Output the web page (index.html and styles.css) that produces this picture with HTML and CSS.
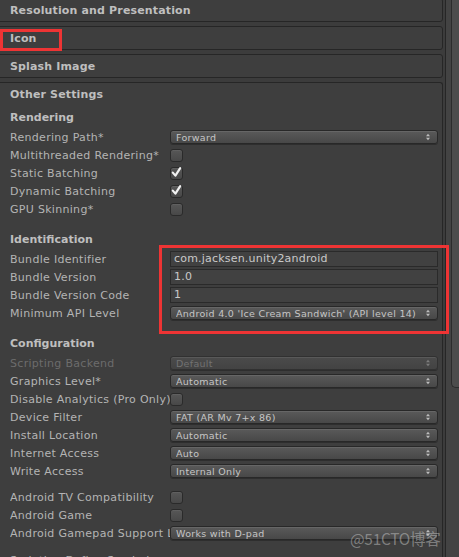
FILE: index.html
```html
<!DOCTYPE html>
<html>
<head>
<meta charset="utf-8">
<link rel="stylesheet" href="styles.css">
</head>
<body>
<div class="window">
  <div class="inspector">
    <div class="foldout first"><div class="foldout-title">Resolution and Presentation</div></div>
    <div class="foldout"><div class="foldout-title">Icon</div></div>
    <div class="foldout"><div class="foldout-title">Splash Image</div></div>
    <div class="foldout open">
      <div class="foldout-title">Other Settings</div>

      <div class="section top">Rendering</div>
      <div class="row"><div class="label">Rendering Path*</div><div class="popup"><span>Forward</span><svg class="arrows" viewBox="0 0 5 9"><path d="M0 3.5 L2.5 0.5 L5 3.5 Z M0 5.5 L2.5 8.5 L5 5.5 Z"/></svg></div></div>
      <div class="row"><div class="label">Multithreaded Rendering*</div><div class="check"></div></div>
      <div class="row"><div class="label">Static Batching</div><div class="check on"><svg viewBox="0 0 13 13"><path d="M2.8 6.6 L5.4 9.6 L10.2 2.2"/></svg></div></div>
      <div class="row"><div class="label">Dynamic Batching</div><div class="check on"><svg viewBox="0 0 13 13"><path d="M2.8 6.6 L5.4 9.6 L10.2 2.2"/></svg></div></div>
      <div class="row"><div class="label">GPU Skinning*</div><div class="check"></div></div>

      <div class="section">Identification</div>
      <div class="row"><div class="label">Bundle Identifier</div><div class="field">com.jacksen.unity2android</div></div>
      <div class="row"><div class="label">Bundle Version</div><div class="field">1.0</div></div>
      <div class="row"><div class="label">Bundle Version Code</div><div class="field">1</div></div>
      <div class="row"><div class="label">Minimum API Level</div><div class="popup"><span>Android 4.0 'Ice Cream Sandwich' (API level 14)</span><svg class="arrows" viewBox="0 0 5 9"><path d="M0 3.5 L2.5 0.5 L5 3.5 Z M0 5.5 L2.5 8.5 L5 5.5 Z"/></svg></div></div>

      <div class="section">Configuration</div>
      <div class="row disabled"><div class="label">Scripting Backend</div><div class="popup"><span>Default</span><svg class="arrows" viewBox="0 0 5 9"><path d="M0 3.5 L2.5 0.5 L5 3.5 Z M0 5.5 L2.5 8.5 L5 5.5 Z"/></svg></div></div>
      <div class="row"><div class="label">Graphics Level*</div><div class="popup"><span>Automatic</span><svg class="arrows" viewBox="0 0 5 9"><path d="M0 3.5 L2.5 0.5 L5 3.5 Z M0 5.5 L2.5 8.5 L5 5.5 Z"/></svg></div></div>
      <div class="row"><div class="label">Disable Analytics (Pro Only)</div><div class="check"></div></div>
      <div class="row"><div class="label">Device Filter</div><div class="popup"><span>FAT (AR Mv 7+x 86)</span><svg class="arrows" viewBox="0 0 5 9"><path d="M0 3.5 L2.5 0.5 L5 3.5 Z M0 5.5 L2.5 8.5 L5 5.5 Z"/></svg></div></div>
      <div class="row"><div class="label">Install Location</div><div class="popup"><span>Automatic</span><svg class="arrows" viewBox="0 0 5 9"><path d="M0 3.5 L2.5 0.5 L5 3.5 Z M0 5.5 L2.5 8.5 L5 5.5 Z"/></svg></div></div>
      <div class="row"><div class="label">Internet Access</div><div class="popup"><span>Auto</span><svg class="arrows" viewBox="0 0 5 9"><path d="M0 3.5 L2.5 0.5 L5 3.5 Z M0 5.5 L2.5 8.5 L5 5.5 Z"/></svg></div></div>
      <div class="row"><div class="label">Write Access</div><div class="popup"><span>Internal Only</span><svg class="arrows" viewBox="0 0 5 9"><path d="M0 3.5 L2.5 0.5 L5 3.5 Z M0 5.5 L2.5 8.5 L5 5.5 Z"/></svg></div></div>

      <div class="spacer"></div>
      <div class="row"><div class="label">Android TV Compatibility</div><div class="check"></div></div>
      <div class="row"><div class="label">Android Game</div><div class="check"></div></div>
      <div class="row"><div class="label">Android Gamepad Support Level</div><div class="popup"><span>Works with D-pad</span><svg class="arrows" viewBox="0 0 5 9"><path d="M0 3.5 L2.5 0.5 L5 3.5 Z M0 5.5 L2.5 8.5 L5 5.5 Z"/></svg></div></div>
      <div class="spacer2"></div>
      <div class="row"><div class="label">Scripting Define Symbols</div></div>
    </div>
  </div>
  <div class="scrollbar"><div class="thumb"></div></div>

  <div class="annot annot-icon"></div>
  <div class="annot annot-ident"></div>
  <div class="watermark">@51CTO博客</div>
</div>
</body>
</html>
```
FILE: styles.css
```css
html, body {
  margin: 0;
  padding: 0;
  background: #3c3c3c;
}
.window {
  position: relative;
  width: 459px;
  height: 557px;
  overflow: hidden;
  display: flex;
  font-family: "DejaVu Sans", "Liberation Sans", sans-serif;
  font-size: 11px;
  color: #b4b4b4;
}
.inspector {
  width: 443px;
  flex: none;
}
.foldout {
  margin-left: -4px;
  height: 22px;
  border: 1px solid #262626;
  border-radius: 3px;
  background: #3e3e3e;
  margin-bottom: 4px;
  padding-left: 13px;
  padding-right: 4px;
}
.foldout.first { margin-top: -2px; }
.foldout.open {
  height: auto;
  border-bottom: none;
  border-radius: 3px 3px 0 0;
}
.foldout-title {
  height: 20px;
  padding-top: 2px;
  line-height: 20px;
  font-weight: bold;
  color: #bfbfbf;
  letter-spacing: 0.15px;
}
.section {
  height: 16px;
  padding-top: 2px;
  line-height: 16px;
  font-weight: bold;
  color: #bfbfbf;
  margin-top: 12px;
  margin-bottom: 2px;
}
.section.top { margin-top: 3px; }
.spacer { height: 8px; }
.spacer2 { height: 9px; }
.row {
  height: 18px;
  display: flex;
  align-items: center;
}
.label {
  width: 160px;
  flex: none;
  height: 16px;
  padding-top: 2px;
  line-height: 16px;
  white-space: nowrap;
  overflow: hidden;
  letter-spacing: 0.3px;
}
.row.disabled .label { color: #6c6c6c; }
.popup {
  flex: 1;
  min-width: 0;
  height: 12px;
  border: 1px solid #282828;
  border-radius: 3px;
  background: linear-gradient(#5a5a5a, #484848);
  box-shadow: 0 1px 0 rgba(0,0,0,0.25), inset 0 1px 0 rgba(255,255,255,0.08);
  display: flex;
  align-items: center;
  padding: 0 7px 0 5px;
  font-size: 9.5px;
  color: #c6c6c6;
  letter-spacing: 0.3px;
  white-space: nowrap;
}
.popup span { flex: 1; overflow: hidden; }
.row.disabled .popup {
  background: linear-gradient(#4b4b4b, #434343);
  border-color: #313131;
  color: #727272;
}
.arrows {
  width: 4px;
  height: 8px;
  flex: none;
  fill: #bdbdbd;
}
.row.disabled .arrows { opacity: 0.45; }
.check {
  width: 11px;
  height: 11px;
  border: 1px solid #2a2a2a;
  border-radius: 3px;
  background: linear-gradient(#575757, #484848);
  box-shadow: inset 0 1px 0 rgba(255,255,255,0.06);
  position: relative;
}
.check svg {
  position: absolute;
  left: -1px;
  top: -2px;
  width: 13px;
  height: 13px;
  fill: none;
  stroke: #f2f2f2;
  stroke-width: 2.2;
  stroke-linecap: round;
  stroke-linejoin: round;
}
.field {
  flex: 1;
  height: 14px;
  border: 1px solid #2a2a2a;
  background: #414141;
  padding-left: 3px;
  line-height: 14px;
  font-size: 11px;
  letter-spacing: 0.2px;
  color: #c9c9c9;
  white-space: nowrap;
}
.scrollbar {
  flex: none;
  width: 13px;
  margin-left: 2px;
  border-left: 1px solid #262626;
  background: #434343;
  position: relative;
}
.thumb {
  position: absolute;
  left: 5px;
  right: 0;
  top: -6px;
  height: 393px;
  background: #4c4c4c;
  border-left: 1px solid #2c2c2c;
  border-bottom: 1px solid #2c2c2c;
  border-radius: 0 0 0 5px;
}
.annot {
  position: absolute;
  border: 3px solid #ee3434;
  box-sizing: border-box;
}
.annot-icon { left: 0; top: 29px; width: 62px; height: 22px; }
.annot-ident { left: 159px; top: 245px; width: 290px; height: 89px; }
.watermark {
  position: absolute;
  left: 350px;
  top: 527px;
  font-family: "Noto Sans CJK SC", "DejaVu Sans", sans-serif;
  font-size: 15.5px;
  color: rgba(210, 210, 210, 0.45);
  letter-spacing: -0.3px;
}
```
